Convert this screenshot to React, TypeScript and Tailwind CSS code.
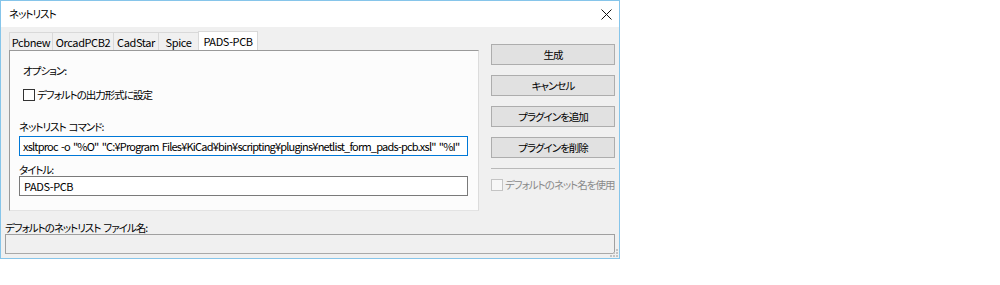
const tabs = [
  { label: 'Pcbnew', w: 'w-[43px]' },
  { label: 'OrcadPCB2', w: 'w-[61px]' },
  { label: 'CadStar', w: 'w-[45px]' },
  { label: 'Spice', w: 'w-[40px]' },
];

const buttons = ['生成', 'キャンセル', 'プラグインを追加', 'プラグインを削除'];

// latin runs get their own size and spacing
const latin = 'text-[11px] tracking-[-0.4px]';

function CloseIcon() {
  return (
    <svg width="11" height="11" viewBox="0 0 11 11" className="block">
      <path d="M0.5 0.5 L10.5 10.5 M10.5 0.5 L0.5 10.5" stroke="#111" strokeWidth="1" fill="none" />
    </svg>
  );
}

function Checkbox({ disabled = false }: { disabled?: boolean }) {
  return (
    <span
      className={
        disabled
          ? 'block h-[12px] w-[12px] shrink-0 border border-[#c4c4c4] bg-[#f7f7f7]'
          : 'block h-[12px] w-[12px] shrink-0 border border-[#333333] bg-white'
      }
    />
  );
}

export default function App() {
  return (
    <div className="relative h-[285px] w-[1000px] bg-white font-['Noto_Sans_CJK_JP',sans-serif] text-[10.5px] leading-[12px] tracking-[-1px] text-black whitespace-nowrap [font-feature-settings:'palt']">
      <div className="relative flex h-[259px] w-[620px] flex-col border border-[#86c5ea] bg-[#f0f0f0]">
        {/* title bar */}
        <div className="flex h-[26px] shrink-0 items-center justify-between bg-white pl-[8px] pr-[7px]">
          <span>ネットリスト</span>
          <CloseIcon />
        </div>

        <div className="flex flex-1 flex-col px-[4px] pt-[4px]">
          <div className="flex">
            {/* notebook */}
            <div className="ml-[4px] flex w-[470px] flex-col">
              <div className={`flex h-[19px] items-end ${latin}`}>
                {tabs.map((t) => (
                  <div
                    key={t.label}
                    className={`${t.w} flex h-[18px] items-center justify-center border-l border-t border-[#d9d9d9] bg-[#f0f0f0]`}
                  >
                    {t.label}
                  </div>
                ))}
                <div className="flex h-[19px] w-[60px] items-center justify-center border-x border-t border-[#d9d9d9] bg-white">
                  PADS-PCB
                </div>
              </div>

              <div className="flex h-[161px] flex-col border border-b-[#e3e3e3] border-l-[#9a9a9a] border-r-[#dcdcdc] border-t-[#9a9a9a] bg-[#fcfcfc] pl-[9px] pr-[10px]">
                <div className="ml-[4px] mt-[14px]">オプション:</div>
                <div className="ml-[4px] mt-[11px] flex h-[13px] items-center gap-[2px]">
                  <Checkbox />
                  <span>デフォルトの出力形式に設定</span>
                </div>
                <div className="mt-[20px]">
                  ネットリスト<span className="ml-[3px]">コマンド:</span>
                </div>
                <div className="mt-[3px] flex h-[20px] items-center overflow-hidden border border-[#0078d7] bg-white px-[3px] text-[11px] tracking-[-0.8px] [word-spacing:1.5px]">
                  xsltproc -o "%O" "C:¥Program Files¥KiCad¥bin¥scripting¥plugins¥netlist_form_pads-pcb.xsl" "%I"
                </div>
                <div className="mt-[8px]">タイトル:</div>
                <div className={`flex h-[20px] items-center border border-[#7a7a7a] bg-white px-[4px] ${latin}`}>
                  PADS-PCB
                </div>
              </div>
            </div>

            {/* button column */}
            <div className="ml-[12px] mt-[13px] flex w-[124px] flex-col">
              <div className="flex flex-col gap-[10px]">
                {buttons.map((b) => (
                  <div
                    key={b}
                    className="flex h-[21px] items-center justify-center border border-[#adadad] bg-[#e1e1e1]"
                  >
                    {b}
                  </div>
                ))}
              </div>
              <div className="mt-[10px] h-px bg-[#b9b9b9]" />
              <div className="mt-[9px] flex h-[13px] items-center gap-[2px] text-[#8a8a8a]">
                <Checkbox disabled />
                <span>デフォルトのネット名を使用</span>
              </div>
            </div>
          </div>

          <div className="mt-[11px]">
            デフォルトのネットリスト<span className="ml-[3px]">ファイル名:</span>
          </div>
          <div className="h-[20px] border border-b-[#a9a9a9] border-l-[#a0a0a0] border-r-[#a0a0a0] border-t-[#a0a0a0] bg-[#f0f0f0]" />
        </div>

        {/* resize grip */}
        <svg width="8" height="8" viewBox="0 0 8 8" className="absolute bottom-[1px] right-[1px]">
          <rect x="6" y="0" width="2" height="2" fill="#c3c3c3" />
          <rect x="3" y="3" width="2" height="2" fill="#c3c3c3" />
          <rect x="6" y="3" width="2" height="2" fill="#c3c3c3" />
          <rect x="0" y="6" width="2" height="2" fill="#c3c3c3" />
          <rect x="3" y="6" width="2" height="2" fill="#c3c3c3" />
          <rect x="6" y="6" width="2" height="2" fill="#c3c3c3" />
        </svg>
      </div>
    </div>
  );
}
